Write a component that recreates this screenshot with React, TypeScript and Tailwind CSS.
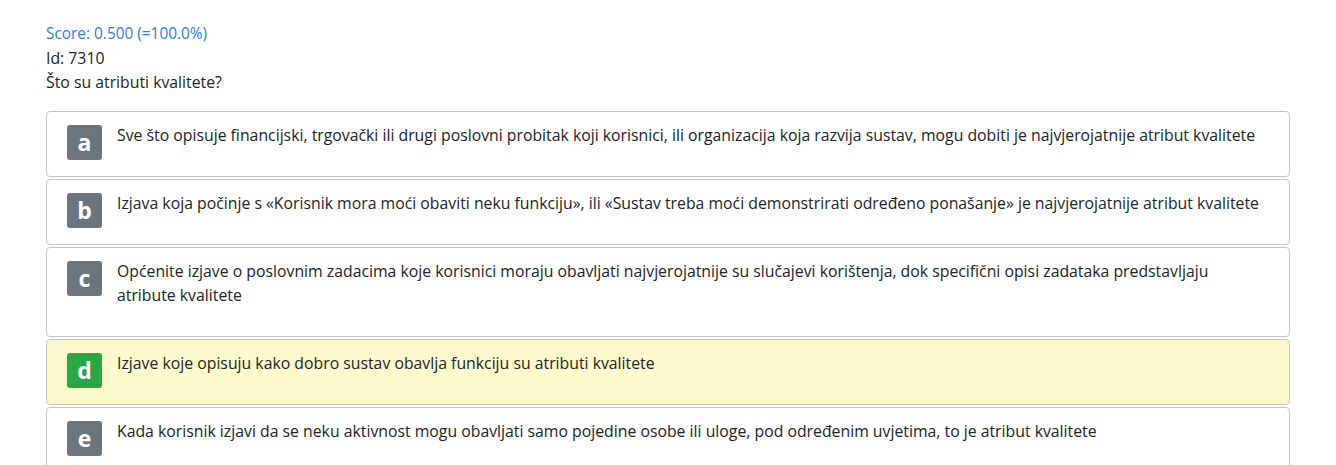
const answers = [
  {
    letter: 'a',
    text: 'Sve što opisuje financijski, trgovački ili drugi poslovni probitak koji korisnici, ili organizacija koja razvija sustav, mogu dobiti je najvjerojatnije atribut kvalitete',
  },
  {
    letter: 'b',
    text: 'Izjava koja počinje s «Korisnik mora moći obaviti neku funkciju», ili «Sustav treba moći demonstrirati određeno ponašanje» je najvjerojatnije atribut kvalitete',
  },
  {
    letter: 'c',
    text: 'Općenite izjave o poslovnim zadacima koje korisnici moraju obavljati najvjerojatnije su slučajevi korištenja, dok specifični opisi zadataka predstavljaju atribute kvalitete',
  },
  {
    letter: 'd',
    text: 'Izjave koje opisuju kako dobro sustav obavlja funkciju su atributi kvalitete',
    correct: true,
  },
  {
    letter: 'e',
    text: 'Kada korisnik izjavi da se neku aktivnost mogu obavljati samo pojedine osobe ili uloge, pod određenim uvjetima, to je atribut kvalitete',
  },
];

const App = () => {
  return (
    <div className="min-h-screen bg-white px-[46px] pt-[22px] text-[15.8px] leading-6 text-[#212529] font-['Open_Sans',sans-serif]">
      <div className="text-[15.4px] text-[#2f80dd]">Score: 0.500 (=100.0%)</div>
      <div>Id: 7310</div>
      <div className="mb-[17px]">Što su atributi kvalitete?</div>

      <div className="flex flex-col gap-[2px]">
        {answers.map(a => (
          <div
            key={a.letter}
            className={`flex items-start rounded border border-[#c4c4c4] px-5 py-3 ${
              a.correct ? 'bg-[#fef9cd]' : 'bg-white'
            }`}
          >
            <div
              className={`mt-px flex h-[35px] w-[35px] shrink-0 items-center justify-center rounded-[3px] text-[23px] font-bold leading-none text-white ${
                a.correct ? 'bg-[#28a745]' : 'bg-[#6c757d]'
              }`}
            >
              {a.letter}
            </div>
            <p className="-mt-px mb-4 ml-[15px] pb-px">{a.text}</p>
          </div>
        ))}
      </div>
    </div>
  );
};

export default App;
